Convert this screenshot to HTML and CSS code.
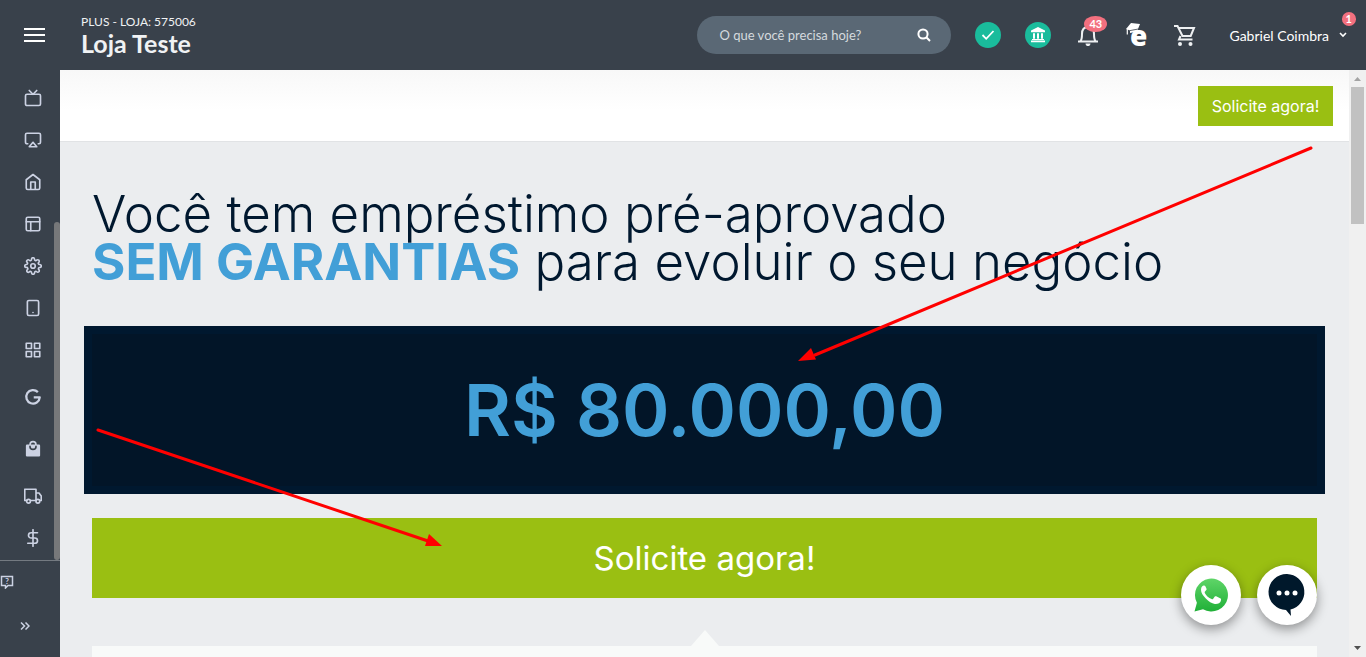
FILE: index.html
```html
<!DOCTYPE html>
<html lang="pt-BR">

<head>
    <meta charset="UTF-8">
    <meta name="viewport" content="width=device-width, initial-scale=1.0">
    <title>Loja Teste</title>
    <link rel="stylesheet" href="styles.css">
</head>

<body>
    <header class="header">
        <button class="icon-button menu-button" aria-label="Menu">
            <svg width="21" height="16" viewBox="0 0 21 16"><path d="M0 2h21M0 8h21M0 14h21" stroke="#fff" stroke-width="2"/></svg>
        </button>
        <div class="store">
            <span class="store-plan">PLUS - LOJA: 575006</span>
            <strong class="store-name">Loja Teste</strong>
        </div>
        <form class="search">
            <input type="text" placeholder="O que você precisa hoje?" aria-label="Buscar">
            <button type="button" class="icon-button" aria-label="Pesquisar">
                <svg width="14" height="14" viewBox="0 0 14 14" fill="none" stroke="#fff" stroke-width="2"><circle cx="6" cy="6" r="4.6"/><path d="M9.3 9.3l3.7 3.7"/></svg>
            </button>
        </form>
        <div class="actions">
            <button class="icon-button round" aria-label="Status">
                <svg width="14" height="12" viewBox="0 0 14 12" fill="none" stroke="#fff" stroke-width="1.800"><path d="M1.5 6l3.700 3.800L12.500 2"/></svg>
            </button>
            <button class="icon-button round" aria-label="Banco">
                <svg width="16" height="16" viewBox="0 0 16 16" fill="#fff"><path d="M8 0l7 3.6v1.6H1V3.6zM3 6.2h2v5.6H3zM7 6.2h2v5.6H7zM11 6.2h2v5.6h-2zM2 12h12v1H2zM1 13.6h14v1.6H1z"/></svg>
            </button>
            <button class="icon-button bell" aria-label="Notificações">
                <svg width="22" height="24" viewBox="0 0 22 24" fill="none" stroke="#eef0f2" stroke-width="2"><path d="M1 18.5h20M3.5 18c1.3-1.5 1.5-3 1.5-7 0-4.500 2.200-7 6-7s6 2.500 6 7c0 4 .2 5.500 1.500 7"/><path d="M8.500 20.500h5c-.2 2-1.200 2.500-2.500 2.500s-2.300-.5-2.500-2.500z" fill="#eef0f2" stroke="none"/></svg>
                <span class="badge">43</span>
            </button>
            <button class="icon-button" aria-label="Escola">
                <svg width="24" height="28" viewBox="0 0 24 28"><text x="5" y="25" class="logo-letter">e</text><path d="M1 8l5-6 9 1-2 5-8 1.500z" fill="#fff"/><path d="M5 9v3l8-1.500V7.500" fill="#fff"/><path d="M4.500 9.700l8.800-1.700" stroke="#39414b" stroke-width=".8" fill="none"/><path d="M2.300 8v5.500" stroke="#fff" stroke-width="1.200"/></svg>
            </button>
            <button class="icon-button" aria-label="Carrinho">
                <svg width="24" height="24" viewBox="0 0 24 24" fill="none" stroke="#eef0f2" stroke-width="2"><path d="M1 3h3.500l5 10h8.200L21 5H5.500M7.500 13L6 16.500h13.500"/><circle cx="7" cy="21" r="2" fill="#eef0f2" stroke="none"/><circle cx="17.500" cy="21" r="2" fill="#eef0f2" stroke="none"/></svg>
            </button>
            <button class="icon-button user">
                <span>Gabriel Coimbra</span>
                <svg width="8" height="6" viewBox="0 0 8 6" fill="none" stroke="#fff" stroke-width="1.600"><path d="M1 1l3 3 3-3"/></svg>
                <span class="badge user-badge">1</span>
            </button>
        </div>
    </header>

    <div class="layout">
        <aside class="sidebar">
            <div class="sidebar-scroll">
                <nav class="nav">
                    <a href="#" aria-label="Painel"><svg viewBox="0 0 24 24"><rect x="2" y="7" width="20" height="15" rx="2"/><path d="M17 2l-5 5-5-5"/></svg></a>
                    <a href="#" aria-label="Transmissão"><svg viewBox="0 0 24 24"><path d="M5 17H4a2 2 0 0 1-2-2V5a2 2 0 0 1 2-2h16a2 2 0 0 1 2 2v10a2 2 0 0 1-2 2h-1M12 15l5 6H7z"/></svg></a>
                    <a href="#" aria-label="Início"><svg viewBox="0 0 24 24"><path d="M3 9l9-7 9 7v11a2 2 0 0 1-2 2H5a2 2 0 0 1-2-2zM9 22V12h6v10"/></svg></a>
                    <a href="#" aria-label="Layout"><svg viewBox="0 0 24 24"><rect x="3" y="3" width="18" height="18" rx="2"/><path d="M3 9h18M9 21V9"/></svg></a>
                    <a href="#" aria-label="Configurações"><svg viewBox="0 0 24 24"><circle cx="12" cy="12" r="3"/><path d="M19.400 15a1.650 1.650 0 0 0 .33 1.820l.06.06a2 2 0 1 1-2.830 2.830l-.06-.06a1.650 1.650 0 0 0-2.820 1.170V21a2 2 0 0 1-4 0v-.09a1.650 1.650 0 0 0-2.900-1.080l-.06.06a2 2 0 1 1-2.830-2.830l.06-.06A1.650 1.650 0 0 0 3.090 14H3a2 2 0 0 1 0-4h.09a1.650 1.650 0 0 0 1.170-2.820l-.06-.06a2 2 0 1 1 2.830-2.830l.06.06A1.650 1.650 0 0 0 10 3.090V3a2 2 0 0 1 4 0v.09a1.650 1.650 0 0 0 2.820 1.170l.06-.06a2 2 0 1 1 2.830 2.830l-.06.06A1.650 1.650 0 0 0 20.910 10H21a2 2 0 0 1 0 4h-.09a1.650 1.650 0 0 0-1.510 1z"/></svg></a>
                    <a href="#" aria-label="Aplicativo"><svg viewBox="0 0 24 24"><rect x="4.500" y="2" width="15" height="20" rx="2"/><path d="M12 18h.01"/></svg></a>
                    <a href="#" aria-label="Módulos"><svg viewBox="0 0 24 24"><path d="M3 3h7v7H3zM14 3h7v7h-7zM14 14h7v7h-7zM3 14h7v7H3z"/></svg></a>
                    <a href="#" class="tall" aria-label="Google"><svg viewBox="0 0 24 24"><path d="M18.500 5.500a9 9 0 1 0 2.500 7h-8" class="bold"/></svg></a>
                    <a href="#" class="tall" aria-label="Vendas"><svg viewBox="0 0 24 24"><path d="M7 6a5 5 0 0 1 10 0h3a1.500 1.500 0 0 1 1.500 1.500v13A1.500 1.500 0 0 1 20 22H4a1.500 1.500 0 0 1-1.500-1.500v-13A1.500 1.500 0 0 1 4 6z" class="solid"/><path d="M9.200 6a2.800 2.800 0 0 1 5.600 0z" class="hole"/><path d="M8 8.500a4 4 0 0 0 8 0" class="handle"/></svg></a>
                    <a href="#" aria-label="Entregas"><svg viewBox="0 0 24 24"><path d="M4 18H1V3h15v15H9M16 8h4l3 4v6h-2"/><circle cx="6" cy="19" r="2.500"/><circle cx="18.500" cy="19" r="2.500"/></svg></a>
                    <a href="#" aria-label="Financeiro"><svg viewBox="0 0 24 24"><path d="M12 1v22M18 5H9.500a3.500 3.500 0 0 0 0 7h5a3.500 3.500 0 0 1 0 7H5"/></svg></a>
                </nav>
                <div class="sidebar-track"><div class="sidebar-thumb"></div></div>
            </div>
            <div class="sidebar-footer">
                <a href="#" class="help" aria-label="Ajuda"><svg width="14" height="14" viewBox="0 0 14 14" fill="none"><path d="M1.500 1.500h11v9H8l-2.500 2.500v-2.500h-4z"/><text x="7" y="9" text-anchor="middle">?</text></svg></a>
                <button class="icon-button expand" aria-label="Expandir"><svg width="10" height="8" viewBox="0 0 10 8" fill="none" stroke="#ccd2e3" stroke-width="1.500"><path d="M1 .5L4.500 4 1 7.500M5.500.5L9 4 5.500 7.500"/></svg></button>
            </div>
        </aside>

        <main class="content">
            <div class="topbar">
                <button class="cta cta-small">Solicite agora!</button>
            </div>
            <section class="offer">
                <h1>Você tem empréstimo pré-aprovado<br><b>SEM GARANTIAS</b> para evoluir o seu negócio</h1>
                <div class="amount">R$ 80.000,00</div>
                <button class="cta cta-large">Solicite agora!</button>
                <div class="details"></div>
            </section>
        </main>

        <div class="scrollbar">
            <svg width="17" height="17" viewBox="0 0 17 17"><path d="M5 11l3.500-4 3.500 4z" fill="#a3a3a3"/></svg>
            <div class="scrollbar-thumb"></div>
            <svg width="17" height="17" viewBox="0 0 17 17"><path d="M5 6l3.500 4L12 6z" fill="#505050"/></svg>
        </div>
    </div>

    <div class="floating">
        <button class="float-button" aria-label="WhatsApp">
            <svg width="40" height="40" viewBox="0 0 40 40">
                <defs><linearGradient id="wa" x1="0" y1="0" x2="0" y2="1"><stop offset="0" stop-color="#5fd568"/><stop offset="1" stop-color="#20b038"/></linearGradient></defs>
                <path d="M3.500 36.500l2.400-8.700A16.500 16.500 0 1 1 12 34.200z" fill="url(#wa)"/>
                <path d="M14.500 11.500c-.5-1-1-1-1.700-1-1 0-2.800 1.200-2.800 4.300 0 3 2 5.800 4.800 8.800s6 5 9 5.400c3 .3 5.500-1.200 6-3 .4-1.500.4-2.300-.2-2.600l-4.400-2.100c-.6-.2-1-.2-1.400.3l-1.800 2.300c-.4.5-.8.500-1.400.2-3-1.300-5.200-3.300-6.800-6.200-.3-.5-.1-.9.2-1.300l1.300-1.500c.4-.5.4-.9.200-1.400z" fill="#fff"/>
            </svg>
        </button>
        <button class="float-button" aria-label="Chat">
            <svg width="40" height="46" viewBox="0 0 40 46"><path d="M20 2a18 18 0 1 0 -1 36l5 6-.5-6.500A18 18 0 0 0 20 2z" fill="#00182b"/><circle cx="12" cy="21" r="2.500" fill="#fff"/><circle cx="20" cy="21" r="2.500" fill="#fff"/><circle cx="28" cy="21" r="2.500" fill="#fff"/></svg>
        </button>
    </div>

    <!-- Arrows drawn over the page -->
    <svg class="arrows" width="1366" height="657" viewBox="0 0 1366 657">
        <g stroke="#f00" stroke-width="3" stroke-linecap="round"><path d="M1311 148L815 355M98 430l330 111"/></g>
        <path d="M798 361l13-13 5 11.500zM442 546l-13-12-4 12z" fill="#f00"/>
    </svg>
</body>

</html>
```
FILE: styles.css
```css
* {
    box-sizing: border-box;
}

body {
    margin: 0;
    height: 100vh;
    display: flex;
    flex-direction: column;
    overflow: hidden;
    font-family: Lato, sans-serif;
    font-size: 14px;
    color: #fff;
    background: #ebedef;
}

button {
    border: none;
    padding: 0;
    font: inherit;
    color: inherit;
    cursor: pointer;
}

svg {
    display: block;
    flex-shrink: 0;
}

.icon-button {
    display: flex;
    align-items: center;
    justify-content: center;
    background: none;
}

/* Header */
.header {
    display: flex;
    align-items: center;
    height: 70px;
    flex-shrink: 0;
    padding: 0 19px 0 24px;
    background: #39414b;
}

.store {
    display: flex;
    flex-direction: column;
    margin-left: 36px;
    color: #f0f2f4;
}

.store-plan {
    font-size: 12px;
    line-height: 16px;
}

.store-name {
    font-size: 25px;
    line-height: 26px;
}

.search {
    display: flex;
    align-items: center;
    width: 254px;
    height: 38px;
    margin-left: auto;
    padding: 0 20px 0 22px;
    border-radius: 19px;
    background: #5a6875;
}

.search input {
    flex: 1;
    min-width: 0;
    padding: 0;
    border: none;
    outline: none;
    background: none;
    font: inherit;
    font-size: 13px;
    color: #fff;
}

.search input::placeholder {
    color: #d5dade;
}

.actions {
    display: flex;
    align-items: center;
    gap: 24px;
    margin-left: 24px;
}

.round {
    width: 26px;
    height: 26px;
    border-radius: 50%;
    background: #1abc9c;
}

.bell,
.user {
    position: relative;
}

.bell {
    width: 26px;
}

.badge {
    position: absolute;
    top: -7px;
    left: 9px;
    padding: 0 5px;
    border-radius: 50%;
    background: #f3707f;
    font-size: 11px;
    font-weight: bold;
    line-height: 16px;
}

.user {
    gap: 10px;
    margin-left: 8px;
    white-space: nowrap;
}

.user-badge {
    top: -15px;
    left: auto;
    right: -9px;
    padding: 0 4px;
    line-height: 14px;
}

.logo-letter {
    font-family: "Open Sans", sans-serif;
    font-size: 28px;
    font-weight: 800;
    fill: #fff;
}

/* Sidebar */
.layout {
    display: flex;
    flex: 1;
    min-height: 0;
}

.sidebar {
    display: flex;
    flex-direction: column;
    width: 60px;
    background: #39414b;
}

.sidebar-scroll {
    display: flex;
    flex: 1;
    min-height: 0;
    overflow: hidden;
}

.nav {
    flex: 1;
    padding-top: 7px;
}

.nav a {
    display: flex;
    align-items: center;
    height: 42px;
    padding-left: 24px;
}

.nav .tall {
    height: 52px;
}

.nav svg {
    width: 18px;
    height: 18px;
    fill: none;
    stroke: #ccd2e3;
    stroke-width: 2.2;
    stroke-linecap: round;
    stroke-linejoin: round;
}

.nav .bold {
    stroke-width: 3;
    stroke-linecap: butt;
}

.nav .solid {
    fill: #ccd2e3;
    stroke: none;
}

.nav .hole {
    fill: #39414b;
    stroke: none;
}

.nav .handle {
    stroke: #39414b;
}

.sidebar-track {
    display: flex;
    align-items: flex-end;
    width: 6px;
}

.sidebar-thumb {
    width: 6px;
    height: 69%;
    border-radius: 3px;
    background: #77787a;
}

.sidebar-footer {
    height: 97px;
    border-top: 1px solid #747a81;
    padding-top: 14px;
}

.help path {
    stroke: #ccd2e3;
    stroke-width: 1.5;
}

.help text {
    fill: #ccd2e3;
    font-size: 8px;
    font-weight: bold;
}

.expand {
    margin: 33px 0 0 20px;
}

/* Content */
.content {
    flex: 1;
    min-width: 0;
    overflow: hidden;
}

.topbar {
    display: flex;
    justify-content: flex-end;
    padding: 16px 16px 15px;
    border-bottom: 1px solid #e1e3e5;
    background: linear-gradient(#f8f8f8, #fff 40px);
}

.cta {
    background: #9abf12;
    font-family: Inter, sans-serif;
    color: #fff;
}

.cta-small {
    width: 135px;
    height: 40px;
    font-size: 16px;
}

.cta-large {
    height: 80px;
    font-size: 33px;
}

.offer {
    display: flex;
    flex-direction: column;
    padding: 48px 32px 0;
    font-family: Inter, sans-serif;
}

.offer h1 {
    margin: 0;
    font-size: 51px;
    font-weight: 300;
    line-height: 48px;
    color: #00182f;
}

.offer b {
    font-weight: 700;
    color: #429fd7;
}

.amount {
    margin: 40px -8px 24px;
    border: 8px solid #00182f;
    background: #021528;
    color: #429fd7;
    font-size: 72px;
    font-weight: 600;
    line-height: 152px;
    text-align: center;
}

.details {
    position: relative;
    min-height: 200px;
    margin-top: 48px;
    background: #f8faf9;
}

.details::before {
    content: "";
    position: absolute;
    top: -16px;
    left: 50%;
    margin-left: -14px;
    border: 14px solid transparent;
    border-top: none;
    border-bottom: 16px solid #f8faf9;
}

/* Window scrollbar */
.scrollbar {
    display: flex;
    flex-direction: column;
    width: 17px;
    background: #f0f0f0;
}

.scrollbar-thumb {
    height: 137px;
    margin: 0 2px auto;
    background: #c1c1c1;
}

/* Chat buttons */
.floating {
    position: fixed;
    right: 49px;
    bottom: 32px;
    display: flex;
    gap: 16px;
}

.float-button {
    display: flex;
    align-items: center;
    justify-content: center;
    width: 60px;
    height: 60px;
    border-radius: 50%;
    background: #fff;
    box-shadow: 0 4px 12px rgba(0, 0, 0, 0.4);
}

.arrows {
    position: absolute;
    top: 0;
    left: 0;
    pointer-events: none;
}
```
